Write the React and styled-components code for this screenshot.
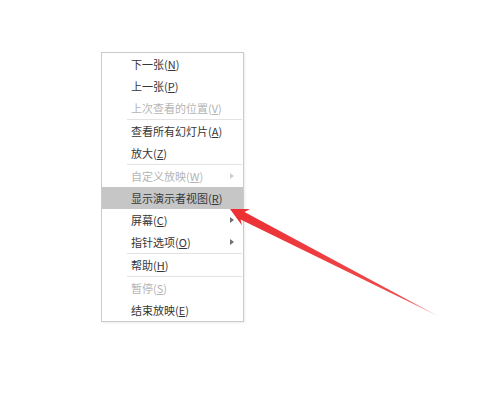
import React from 'react';
import styled, { createGlobalStyle } from 'styled-components';

const GlobalStyle = createGlobalStyle`
  html, body {
    margin: 0;
    padding: 0;
    background: #ffffff;
  }
  body {
    font-family: "Noto Sans CJK SC", "Noto Sans", sans-serif;
  }
`;

const Page = styled.div`
  position: relative;
  width: 500px;
  height: 413px;
  padding: 52px 0 0 101px;
  box-sizing: border-box;
  background: #ffffff;
  overflow: hidden;
`;

const Menu = styled.ul`
  list-style: none;
  margin: 0;
  padding: 0;
  width: 141px;
  background: #ffffff;
  border: 1px solid #cbcbcb;
  box-shadow: 1px 1px 2px rgba(0, 0, 0, 0.08);
  display: flex;
  flex-direction: column;
`;

const Item = styled.li`
  height: 22px;
  display: flex;
  align-items: center;
  justify-content: space-between;
  padding: 0 9px 0 29px;
  font-size: 11px;
  color: ${(p) => (p.$disabled ? '#b5b5b5' : '#363636')};
  background: ${(p) => (p.$active ? '#c6c6c6' : 'transparent')};
  white-space: nowrap;

  u {
    text-decoration: underline;
    text-underline-offset: 1px;
  }
`;

const SubArrow = styled.span`
  width: 0;
  height: 0;
  border-top: 3px solid transparent;
  border-bottom: 3px solid transparent;
  border-left: 4px solid ${(p) => (p.$disabled ? '#cfcfcf' : '#6f6f6f')};
`;

const Separator = styled.li`
  height: 1px;
  margin: 0 1px 0 25px;
  background: #e2e2e2;
`;

const Pointer = styled.svg`
  position: absolute;
  left: 0;
  top: 0;
  width: 500px;
  height: 413px;
  pointer-events: none;
`;

const items = [
  { label: '下一张', key: 'N' },
  { label: '上一张', key: 'P' },
  { label: '上次查看的位置', key: 'V', disabled: true },
  'sep',
  { label: '查看所有幻灯片', key: 'A' },
  { label: '放大', key: 'Z' },
  'sep',
  { label: '自定义放映', key: 'W', disabled: true, sub: true },
  { label: '显示演示者视图', key: 'R', active: true },
  { label: '屏幕', key: 'C', sub: true },
  { label: '指针选项', key: 'O', sub: true },
  'sep',
  { label: '帮助', key: 'H' },
  'sep',
  { label: '暂停', key: 'S', disabled: true },
  { label: '结束放映', key: 'E' },
];

export default function App() {
  return (
    <>
      <GlobalStyle />
      <Page>
        <Menu>
          {items.map((it, i) =>
            it === 'sep' ? (
              <Separator key={i} />
            ) : (
              <Item key={i} $disabled={it.disabled} $active={it.active}>
                <span>
                  {it.label}(<u>{it.key}</u>)
                </span>
                {it.sub && <SubArrow $disabled={it.disabled} />}
              </Item>
            )
          )}
        </Menu>

        {/* red callout arrow pointing at the highlighted entry */}
        <Pointer viewBox="0 0 500 413">
          <defs>
            <linearGradient id="shaft" x1="230" y1="209" x2="438" y2="316" gradientUnits="userSpaceOnUse">
              <stop offset="0" stopColor="#ec2f33" />
              <stop offset="0.8" stopColor="#ef4a4c" />
              <stop offset="1" stopColor="#f6a0a0" />
            </linearGradient>
          </defs>
          <polygon
            points="230,209 250,209 244.5,212 438,316 240.6,219.5 242,225.5"
            fill="url(#shaft)"
          />
        </Pointer>
      </Page>
    </>
  );
}
